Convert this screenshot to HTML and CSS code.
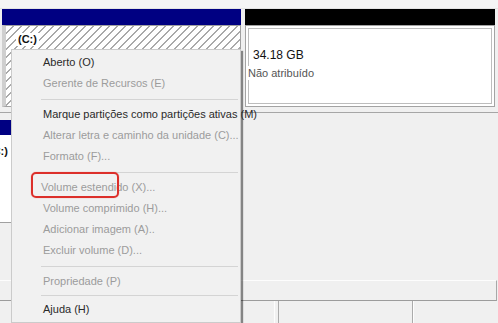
FILE: index.html
```html
<!DOCTYPE html>
<html lang="pt">
<head>
<meta charset="utf-8">
<title>Gerenciamento de disco</title>
<link rel="stylesheet" href="styles.css">
</head>
<body>
<div class="screen">
  <div class="topstrip"></div>
  <div class="disk disk1">
    <div class="part part-c">
      <div class="bar bar-blue"></div>
      <div class="pbody hatch"><span class="vol">(C:)</span></div>
    </div>
    <div class="part part-free">
      <div class="bar bar-black"></div>
      <div class="pbody plain">
        <div class="inner">
          <div class="size">34.18 GB</div>
          <div class="status">Não atribuído</div>
        </div>
      </div>
    </div>
  </div>
  <div class="disk disk2">
    <div class="part part-d">
      <div class="bar bar-blue thin"></div>
      <div class="pbody white"><span class="vol vol-shift">(C:)</span></div>
    </div>
  </div>
  <div class="panel"></div>
  <div class="statusbar">
    <div class="cell c1"></div>
    <div class="cell c2"></div>
    <div class="cell c3"></div>
  </div>

  <ul class="menu">
    <li class="item">Aberto (O)</li>
    <li class="item off">Gerente de Recursos (E)</li>
    <li class="sep"></li>
    <li class="item">Marque partições como partições ativas (M)</li>
    <li class="item off">Alterar letra e caminho da unidade (C)...</li>
    <li class="item off">Formato (F)...</li>
    <li class="sep"></li>
    <li class="item off shift">Volume estendido (X)...<span class="hl"></span></li>
    <li class="item off">Volume comprimido (H)...</li>
    <li class="item off">Adicionar imagem (A)..</li>
    <li class="item off">Excluir volume (D)...</li>
    <li class="sep"></li>
    <li class="item off">Propriedade (P)</li>
    <li class="sep tight"></li>
    <li class="item">Ajuda (H)</li>
  </ul>
</div>
</body>
</html>
```

FILE: styles.css
```css
html, body {
  margin: 0;
  padding: 0;
}

body {
  background: #f0f0f0;
}

.screen {
  position: relative;
  width: 498px;
  height: 323px;
  overflow: hidden;
  background: #f0f0f0;
  font-family: "Liberation Sans", Arial, sans-serif;
  font-size: 11px;
  color: #222;
}

.topstrip {
  height: 8px;
  background: #f5f5f5;
  border-bottom: 1px solid #e4e4e4;
}

.disk1 {
  display: flex;
  gap: 4px;
  height: 98px;
  padding: 0 0 5px 2px;
  border-bottom: 1px solid #a6a6a6;
}

.part {
  display: flex;
  flex-direction: column;
}

.part-c {
  width: 239px;
}

.part-free {
  width: 250px;
}

.bar {
  flex: none;
  height: 16px;
}

.bar.thin {
  height: 15px;
}

.bar-blue {
  background: #000082;
}

.bar-black {
  background: #000;
}

.pbody {
  flex: 1;
  min-height: 0;
}

.hatch {
  border: 1px solid #a0a0a0;
  border-left: 4px solid #cfcfcf;
  background: repeating-linear-gradient(135deg, #ffffff 0 4.6px, #a9a9a9 4.6px 5.66px);
  padding: 7px 0 0 10px;
}

.vol {
  display: inline-block;
  font-weight: bold;
  font-size: 11px;
  line-height: 13px;
  color: #111;
  background: #fff;
  padding: 0 2px;
}

.plain {
  background: #fff;
  border: 1px solid #a3a3a3;
  padding: 2px;
  display: flex;
}

.inner {
  flex: 1;
  border: 1px solid #bdbdbd;
  padding: 19px 0 0 4px;
}

.size {
  font-size: 12px;
  line-height: 14px;
  color: #111;
}

.status {
  margin: 4px 0 0 -5px;
  font-size: 11px;
  line-height: 14px;
  color: #555;
  background: #fff;
  width: max-content;
}

.disk2 {
  display: flex;
  height: 103px;
  margin-top: 7px;
}

.part-d {
  width: 241px;
}

.white {
  background: #fff;
  border-bottom: 1px solid #a0a0a0;
  padding-top: 10px;
}

.vol-shift {
  margin-left: -13px;
  background: transparent;
}

.panel {
  height: 19px;
  margin-top: 57px;
  margin-right: 1px;
  border-top: 1px solid #fdfdfd;
  border-bottom: 1px solid #9c9c9c;
  border-right: 1px solid #a8a8a8;
}

.statusbar {
  display: flex;
  height: 22px;
}

.cell {
  height: 100%;
}

.c1 {
  width: 274px;
  border-right: 1px solid #fdfdfd;
}

.c2 {
  width: 133px;
  margin-left: 3px;
  border-left: 1px solid #ababab;
  border-right: 1px solid #ababab;
}

.c3 {
  flex: 1;
  border-left: 1px solid #fdfdfd;
}

.menu {
  position: absolute;
  left: 11px;
  top: 49px;
  width: 228px;
  margin: 0;
  padding: 2px 0;
  list-style: none;
  background: #f1f1f1;
  border: 1px solid #cbcbcb;
  box-shadow: 2px 2px 1px rgba(0, 0, 0, 0.45);
  font-size: 11px;
}

.item {
  position: relative;
  height: 21px;
  line-height: 21px;
  padding-left: 31px;
  white-space: nowrap;
  color: #2a2a2a;
}

.item.off {
  color: #9c9c9c;
}

.item.shift {
  padding-left: 29px;
}

.sep {
  height: 0;
  margin: 5px 2px 4px 29px;
  border-top: 1px solid #d4d4d4;
}

.sep.tight {
  margin: 3px 2px 3px 29px;
}

.hl {
  position: absolute;
  left: 19px;
  top: -5px;
  width: 88px;
  height: 26px;
  box-sizing: border-box;
  border: 2px solid #dc2f2a;
  border-radius: 5px;
  box-shadow: 0 0 1px rgba(220, 47, 42, 0.6);
}
```
